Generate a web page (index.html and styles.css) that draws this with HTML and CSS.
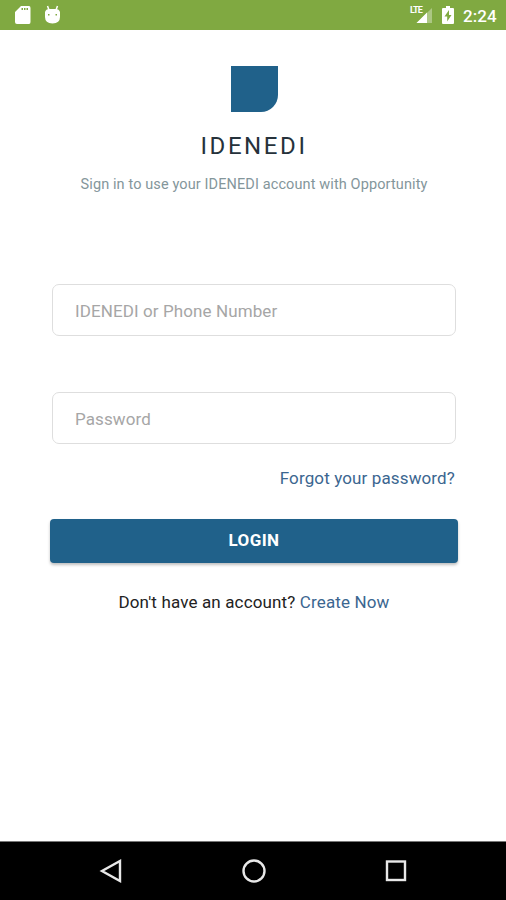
FILE: index.html
```html
<!DOCTYPE html>
<html lang="en">
<head>
<meta charset="utf-8">
<title>IDENEDI Login</title>
<link rel="stylesheet" href="styles.css">
</head>
<body>
<div class="screen">
  <header class="status">
    <svg class="sd" width="16" height="20" viewBox="0 0 16 20"><path fill="#fff" fill-rule="evenodd" d="M6 1H14Q15.500 1 15.500 3V17Q15.500 19 14 19H2Q0 19 0 17V7ZM6.500 3V5H8V3ZM9 3V5H10.500V3ZM11.500 3V5H13V3Z"/></svg>
    <svg class="droid" width="17" height="20" viewBox="0 0 17 20"><path d="M3.500 1L5 5M13.500 1L12 5" stroke="#fff" stroke-width="1.500"/><path fill="#fff" fill-rule="evenodd" d="M1 7Q2 4 5 4H12Q15 4 16 7V12Q16 18 8.500 18.500Q1 18 1 12ZM4 9V10.500H5.500V9ZM11.500 9V10.500H13V9Z"/></svg>
    <span class="spacer"></span>
    <span class="signal"><span class="lte">LTE</span><svg width="18" height="17" viewBox="0 0 18 17"><path fill="#fff" fill-opacity=".35" d="M17 1V16H1.500Z"/><path fill="#fff" d="M12 5.500V16H1.500Z"/></svg></span>
    <svg class="battery" width="12" height="18" viewBox="0 0 12 18"><path fill="#fff" fill-rule="evenodd" d="M4 0H8V2H11Q12 2 12 3V17Q12 18 11 18H1Q0 18 0 17V3Q0 2 1 2H4ZM7 4L2.500 10.500H5.200V15.500L9.500 9H7Z"/></svg>
    <span class="time">2:24</span>
  </header>
  <main class="content">
    <div class="logo"></div>
    <h1 class="brand">IDENEDI</h1>
    <p class="subtitle">Sign in to use your IDENEDI account with Opportunity</p>
    <form class="form">
      <input class="field" type="text" placeholder="IDENEDI or Phone Number">
      <input class="field" type="password" placeholder="Password">
      <a class="forgot">Forgot your password?</a>
      <button class="login" type="button">LOGIN</button>
    </form>
    <p class="signup">Don't have an account? <a>Create Now</a></p>
  </main>
  <nav class="nav">
    <svg width="24" height="24" viewBox="0 0 24 24"><path d="M21 2V22L3 12Z"/></svg>
    <svg width="24" height="24" viewBox="0 0 24 24"><circle cx="12" cy="12" r="10.500"/></svg>
    <svg width="24" height="24" viewBox="0 0 24 24"><rect x="3" y="2.500" width="18" height="18.500"/></svg>
  </nav>
</div>
</body>
</html>
```
FILE: styles.css
```css
* { box-sizing: border-box; }
body { margin: 0; background: #fff; font-family: Roboto, sans-serif; }
.screen { width: 506px; height: 900px; display: flex; flex-direction: column; }
.status { height: 30px; flex: none; background: #80a941; display: flex; align-items: center; padding: 0 9px 0 15px; color: #fff; }
.droid { margin-left: 13px; }
.spacer { flex: 1; }
.signal { position: relative; width: 23px; height: 17px; display: flex; justify-content: flex-end; }
.lte { position: absolute; left: 0; top: -1px; font-size: 9px; line-height: 9px; font-weight: 700; letter-spacing: -0.8px; }
.battery { margin: 0 9px 0 9px; }
.time { width: 34px; padding-top: 2px; font-size: 17px; font-weight: 500; line-height: 28px; white-space: nowrap; letter-spacing: 0.1px; }
.content { flex: 1; display: flex; flex-direction: column; align-items: center; padding-top: 36px; }
.logo { width: 47px; height: 46px; background: #20618a; border-radius: 0 0 17px 0; margin-left: 2px; }
.brand { margin: 20px 0 0; font-size: 24px; line-height: 28px; font-weight: 400; letter-spacing: 2.600px; padding-left: 2px; color: #26323b; }
.subtitle { margin: 15px 0 0; font-size: 14.500px; line-height: 20px; letter-spacing: 0.11px; color: #84969b; white-space: nowrap; padding-left: 2px; }
.form { width: 408px; margin: 89px 0 0 2px; display: flex; flex-direction: column; }
.field { height: 52px; margin: 0 2px 56px; border: 1px solid #dedede; border-radius: 7px; padding: 2px 22px 0; font: 400 17px Roboto, sans-serif; letter-spacing: 0.1px; background: #fff; outline: 0; }
.field + .field { margin-bottom: 24px; }
.field::placeholder { color: #a6a6a6; opacity: 1; }
.forgot { align-self: flex-end; margin-right: 3px; font-size: 17px; line-height: 20px; letter-spacing: 0.13px; color: #3b6690; }
.login { height: 44px; margin-top: 31px; border: 0; border-radius: 4px; background: #20618a; color: #fff; font: 700 17px Roboto, sans-serif; letter-spacing: 0.4px; box-shadow: 0 2px 3px rgba(0,0,0,.25); padding: 0 0 2px; }
.signup { margin: 29px 0 0; font-size: 17px; line-height: 20px; letter-spacing: 0.14px; color: #222; white-space: nowrap; padding-left: 2px; }
.signup a { color: #3b6690; }
.nav { height: 59px; flex: none; background: #000; border-top: 1px solid #777; display: flex; justify-content: space-between; padding: 17px 98px 0 99px; }
.nav svg { fill: none; stroke: #e8e8e8; stroke-width: 2.400; }
```
